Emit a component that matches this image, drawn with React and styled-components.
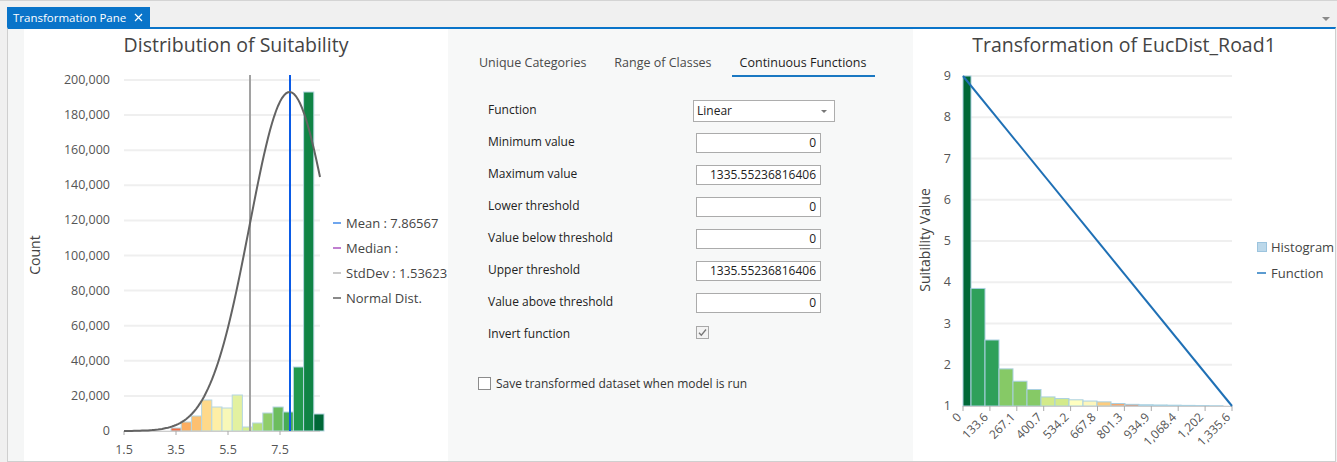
import React from "react"
import styled, { createGlobalStyle } from "styled-components"

const GlobalStyle = createGlobalStyle`
  html, body {
    margin: 0;
    padding: 0;
    background: #f0f0f0;
    font-family: "Segoe UI", "Open Sans", "Noto Sans", sans-serif;
  }
`

const FONT = `"Segoe UI", "Open Sans", "Noto Sans", sans-serif`

// left histogram data (tops are pixel heights inside the plot)
const distBars = [
  { h: 3, c: "#f46d43" },
  { h: 9, c: "#fdae61" },
  { h: 15, c: "#fdc070" },
  { h: 31, c: "#fed98a" },
  { h: 24, c: "#feefa6" },
  { h: 23, c: "#f8f8b8" },
  { h: 36, c: "#e3f1a0" },
  { h: 4, c: "#d9ef8b" },
  { h: 8, c: "#b6e07c" },
  { h: 18, c: "#90cd6a" },
  { h: 24, c: "#6cbd5e" },
  { h: 19, c: "#47ac55" },
  { h: 64, c: "#22994d" },
  { h: 339, c: "#108445" },
  { h: 17, c: "#006837" },
]

const legendItems = [
  { label: "Mean : 7.86567", c: "#6fa6ee" },
  { label: "Median :", c: "#c07fd0" },
  { label: "StdDev : 1.53623", c: "#cacaca" },
  { label: "Normal Dist.", c: "#8a8a8a" },
]

const transBars = [
  { v: 9, w: 8, c: "#006837" },
  { v: 3.85, w: 14, c: "#2ea05a" },
  { v: 2.6, w: 14, c: "#2ea05a" },
  { v: 1.9, w: 14, c: "#86c966" },
  { v: 1.6, w: 14, c: "#86c966" },
  { v: 1.4, w: 14, c: "#86c966" },
  { v: 1.22, w: 14, c: "#d3ea8a" },
  { v: 1.18, w: 14, c: "#d3ea8a" },
  { v: 1.15, w: 14, c: "#ffffc0" },
  { v: 1.12, w: 14, c: "#fdf6bc" },
  { v: 1.1, w: 14, c: "#fdcc7e" },
  { v: 1.06, w: 14, c: "#f7a66c" },
  { v: 1.04, w: 14, c: "#e8845c" },
  { v: 1.03, w: 14, c: "#b9d6e4" },
  { v: 1.025, w: 14, c: "#b9d6e4" },
  { v: 1.02, w: 14, c: "#b9d6e4" },
  { v: 1.015, w: 14, c: "#b9d6e4" },
  { v: 1.01, w: 14, c: "#b9d6e4" },
  { v: 1.005, w: 14, c: "#b9d6e4" },
]

const xTicks = ["0", "133.6", "267.1", "400.7", "534.2", "667.8", "801.3", "934.9", "1,068.4", "1,202", "1,335.6"]

const fields = [
  { label: "Minimum value", value: "0" },
  { label: "Maximum value", value: "1335.55236816406" },
  { label: "Lower threshold", value: "0" },
  { label: "Value below threshold", value: "0" },
  { label: "Upper threshold", value: "1335.55236816406" },
  { label: "Value above threshold", value: "0" },
]

const normalPath = () => {
  const pts = []
  for (let x = 100; x <= 296; x += 2) {
    const z = (x - 265.6) / 40
    pts.push(`${x},${(368 - 339 * Math.exp(-0.5 * z * z)).toFixed(1)}`)
  }
  return "M" + pts.join(" L")
}

const DistributionChart = () => {
  const yOf = v => 368 - (v / 200000) * 351
  let x = 147
  return (
    <ChartSvg width="424" height="398">
      {Array.from({ length: 11 }, (_, i) => i * 20000).map(v => (
        <g key={v}>
          <line x1="100" x2="296" y1={yOf(v)} y2={yOf(v)} stroke="#efefef" strokeWidth="2" />
          <text x="86" y={yOf(v) + 4} textAnchor="end" fontSize="12.5" fill="#555">
            {v.toLocaleString("en-US")}
          </text>
        </g>
      ))}
      <text transform="translate(16 192) rotate(-90)" textAnchor="middle" fontSize="14" fill="#444">
        Count
      </text>
      {distBars.map((b, i) => {
        const bx = x
        x += 10.2
        return (
          <rect key={i} x={bx} y={368 - b.h} width="10.2" height={b.h} fill={b.c} stroke="#b5d6e2" strokeWidth="1" />
        )
      })}
      <line x1="100" x2="296" y1="368.5" y2="368.5" stroke="#ccc" />
      {["1.5", "3.5", "5.5", "7.5"].map((t, i) => (
        <g key={t}>
          <line x1={100 + i * 52} x2={100 + i * 52} y1="368" y2="372" stroke="#aaa" />
          <text x={100 + i * 52} y="391" textAnchor="middle" fontSize="12.5" fill="#555">
            {t}
          </text>
        </g>
      ))}
      <line x1="226" x2="226" y1="12" y2="368" stroke="#a2a2a2" strokeWidth="2" />
      <line x1="266" x2="266" y1="12" y2="368" stroke="#0a5be6" strokeWidth="2" />
      <path d={normalPath()} fill="none" stroke="#636363" strokeWidth="2" />
      {legendItems.map((l, i) => (
        <g key={l.label}>
          <line x1="309" x2="317" y1={160 + i * 25} y2={160 + i * 25} stroke={l.c} strokeWidth="2" />
          <text x="322" y={165 + i * 25} fontSize="13" fill="#444">
            {l.label}
          </text>
        </g>
      ))}
    </ChartSvg>
  )
}

const TransformChart = () => {
  const yOf = v => 343 - (v - 1) * 41.25
  let x = 50
  return (
    <ChartSvg width="422" height="398">
      {[1, 2, 3, 4, 5, 6, 7, 8, 9].map(v => (
        <g key={v}>
          <line x1="50" x2="319" y1={yOf(v)} y2={yOf(v)} stroke="#efefef" strokeWidth="2" />
          <text x="38" y={yOf(v) + 4} textAnchor="end" fontSize="12.5" fill="#555">
            {v}
          </text>
        </g>
      ))}
      <text transform="translate(17 177) rotate(-90)" textAnchor="middle" fontSize="14" fill="#444">
        Suitability Value
      </text>
      {transBars.map((b, i) => {
        const bx = x
        x += b.w
        const top = yOf(b.v)
        return (
          <rect key={i} x={bx} y={top} width={b.w} height={343 - top} fill={b.c} stroke="#a9d0e0" strokeWidth="1" />
        )
      })}
      <line x1="50" x2="319" y1="343.5" y2="343.5" stroke="#ccc" />
      {xTicks.map((t, i) => {
        const tx = 50 + i * 26.9
        return (
          <g key={t}>
            <line x1={tx} x2={tx} y1="343" y2="348" stroke="#aaa" />
            <text transform={`translate(${tx - 1} 355) rotate(-45)`} textAnchor="end" fontSize="12" fill="#555">
              {t}
            </text>
          </g>
        )
      })}
      <line x1="50" y1="13" x2="319" y2="343" stroke="#1f70b5" strokeWidth="2" />
      <rect x="344.5" y="179.5" width="9" height="9" fill="#bcd8ea" stroke="#9cc4de" />
      <text x="358" y="189" fontSize="13" fill="#444">Histogram</text>
      <line x1="344" x2="353" y1="210" y2="210" stroke="#5b9bd0" strokeWidth="2" />
      <text x="358" y="215" fontSize="13" fill="#444">Function</text>
    </ChartSvg>
  )
}

const CheckMark = () => (
  <svg width="11" height="11" viewBox="0 0 11 11">
    <path d="M2 5.8 L4.3 8.2 L9 2.5" fill="none" stroke="#777" strokeWidth="1.3" />
  </svg>
)

export default function App() {
  return (
    <>
      <GlobalStyle />
      <Frame>
        <TabStrip>
          <PaneTab>
            Transformation Pane
            <CloseGlyph viewBox="0 0 9 9">
              <path d="M1 1 L8 8 M8 1 L1 8" stroke="#fff" strokeWidth="1.2" />
            </CloseGlyph>
          </PaneTab>
          <StripMenu />
        </TabStrip>
        <Content>
          <Gutter />
          <ChartPanel>
            <ChartTitle>Distribution of Suitability</ChartTitle>
            <DistributionChart />
          </ChartPanel>
          <SettingsPanel>
            <ModeTabs>
              <ModeTab>Unique Categories</ModeTab>
              <ModeTab>Range of Classes</ModeTab>
              <ModeTab $active>Continuous Functions</ModeTab>
            </ModeTabs>
            <Form>
              <FieldRow>
                <FieldLabel>Function</FieldLabel>
                <SelectBox>
                  Linear
                  <Caret />
                </SelectBox>
              </FieldRow>
              {fields.map(f => (
                <FieldRow key={f.label}>
                  <FieldLabel>{f.label}</FieldLabel>
                  <NumberBox>{f.value}</NumberBox>
                </FieldRow>
              ))}
              <FieldRow>
                <FieldLabel>Invert function</FieldLabel>
                <Check>
                  <CheckMark />
                </Check>
              </FieldRow>
            </Form>
            <SaveRow>
              <Check $plain />
              Save transformed dataset when model is run
            </SaveRow>
          </SettingsPanel>
          <ChartPanel $wide>
            <ChartTitle>Transformation of EucDist_Road1</ChartTitle>
            <TransformChart />
          </ChartPanel>
        </Content>
      </Frame>
    </>
  )
}

const Frame = styled.div`
  width: 1337px;
  height: 462px;
  display: flex;
  flex-direction: column;
  box-sizing: border-box;
  border-top: 1px solid #d4d4d4;
  background: #f0f0f0;
`

const TabStrip = styled.div`
  height: 26px;
  padding: 6px 0 0 7px;
  box-sizing: border-box;
  display: flex;
  align-items: flex-end;
  margin-right: 2px;
`

const PaneTab = styled.div`
  height: 20px;
  background: #0a74c9;
  color: #fff;
  font-size: 11.5px;
  display: flex;
  align-items: center;
  gap: 8px;
  padding: 0 7px 0 6px;
`

const CloseGlyph = styled.svg`
  width: 9px;
  height: 9px;
`

const StripMenu = styled.div`
  margin-left: auto;
  margin-right: 5px;
  margin-bottom: 6px;
  width: 0;
  height: 0;
  border-left: 4px solid transparent;
  border-right: 4px solid transparent;
  border-top: 4px solid #8a8a8a;
`

const Content = styled.div`
  flex: 1;
  display: flex;
  margin-left: 7px;
  margin-right: 1px;
  border-top: 2px solid #0a74c9;
  border-left: 1px solid #cfcfcf;
  border-right: 1px solid #cfcfcf;
  border-bottom: 1px solid #cfcfcf;
  background: #fff;
  min-height: 0;
`

const Gutter = styled.div`
  width: 16px;
  background: #f5f6f6;
`

const ChartPanel = styled.div`
  width: ${p => (p.$wide ? "422px" : "424px")};
  background: #fff;
  display: flex;
  flex-direction: column;
`

const ChartTitle = styled.div`
  height: 34px;
  box-sizing: border-box;
  padding-top: 3px;
  text-align: center;
  font-size: 19.5px;
  color: #444;
  line-height: 26px;
`

const ChartSvg = styled.svg`
  display: block;
  font-family: ${FONT};
`

const SettingsPanel = styled.div`
  width: 465px;
  background: #f7f8f8;
  padding-top: 24px;
  box-sizing: border-box;
  color: #222;
`

const ModeTabs = styled.div`
  display: flex;
  gap: 12px;
  padding-left: 23px;
`

const ModeTab = styled.div`
  padding: 0 8px;
  height: 22px;
  line-height: 20px;
  font-size: 12.5px;
  color: ${p => (p.$active ? "#1e1e1e" : "#4a4a4a")};
  border-bottom: 2px solid ${p => (p.$active ? "#1a78c2" : "transparent")};
`

const Form = styled.div`
  margin-top: 18px;
  padding-left: 40px;
`

const FieldRow = styled.div`
  display: grid;
  grid-template-columns: 208px auto;
  align-items: center;
  height: 32px;
`

const FieldLabel = styled.div`
  font-size: 12px;
  margin-top: -4px;
`

const NumberBox = styled.div`
  width: 125px;
  height: 20px;
  box-sizing: border-box;
  border: 1px solid #ababab;
  background: #fff;
  font-size: 12px;
  text-align: right;
  padding-right: 4px;
  line-height: 18px;
`

const SelectBox = styled.div`
  position: relative;
  margin-left: -3px;
  width: 142px;
  height: 22px;
  box-sizing: border-box;
  border: 1px solid #adadad;
  background: #fff;
  font-size: 12px;
  line-height: 20px;
  padding-left: 3px;
`

const Caret = styled.span`
  position: absolute;
  right: 7px;
  top: 9px;
  border-left: 3px solid transparent;
  border-right: 3px solid transparent;
  border-top: 3px solid #777;
`

const Check = styled.div`
  width: 13px;
  height: 13px;
  box-sizing: border-box;
  border: 1px solid ${p => (p.$plain ? "#8c8c8c" : "#a8a8a8")};
  background: ${p => (p.$plain ? "#fff" : "#f3f3f3")};
  display: flex;
  align-items: center;
  justify-content: center;
  margin-top: ${p => (p.$plain ? "0" : "-6px")};
`

const SaveRow = styled.div`
  display: flex;
  align-items: center;
  gap: 5px;
  margin-top: 24px;
  padding-left: 30px;
  font-size: 12px;
  color: #333;
`
